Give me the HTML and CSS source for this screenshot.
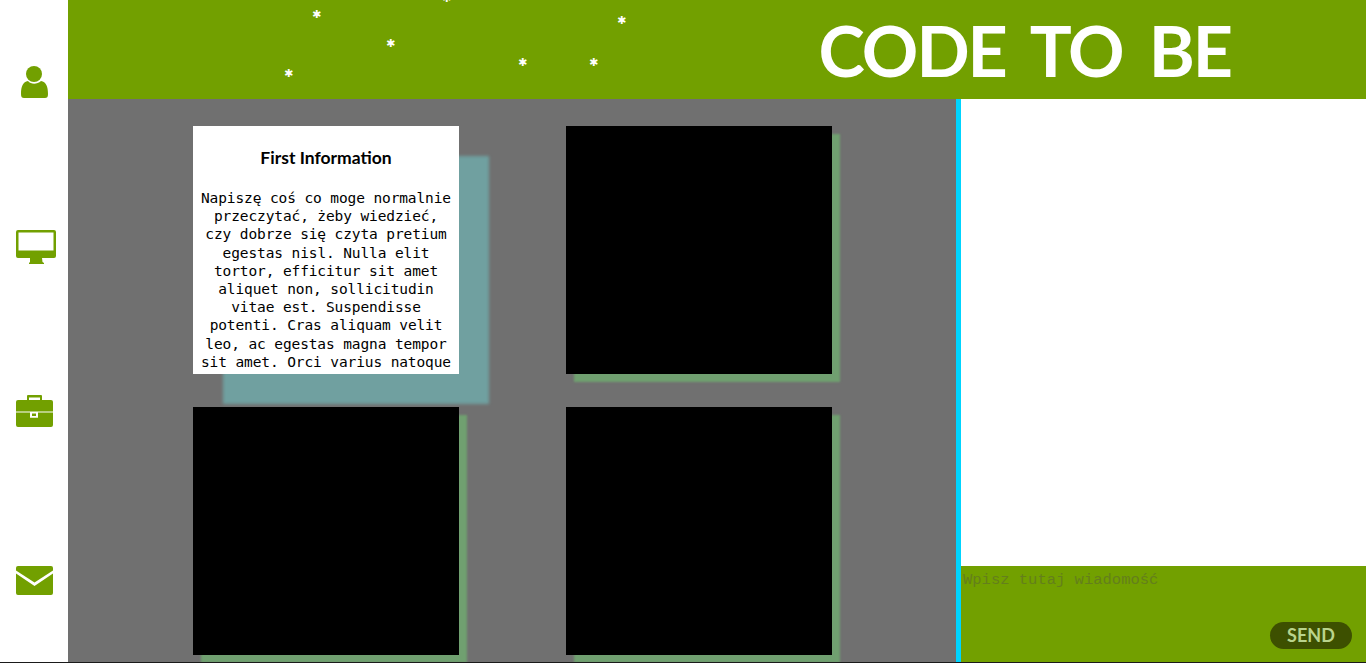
FILE: index.html
```html
<!DOCTYPE html>
<html>
	<head>
		<title>Code To Be</title>
		<meta charset="utf-8">
		<link rel="stylesheet" href="styles.css">
	</head>
	<body>
		<div id="page">
			<nav id="sidebar">
				<a href="#" class="nav_item">
					<svg class="nav_icon" viewBox="0 0 44 45">
						<circle cx="22" cy="14" r="8"/>
						<path d="M9 34 C9 26 11 22 16 21 C19 24.5 25 24.5 29 21 C34 22 36 26 36 34 C36 37 35 38 33 38 L12 38 C10 38 9 37 9 34 Z"/>
					</svg>
				</a>
				<a href="#" class="nav_item">
					<svg class="nav_icon" viewBox="0 0 44 45">
						<path fill-rule="evenodd" d="M6 5 L42 5 Q44 5 44 7 L44 31 Q44 33 42 33 L6 33 Q4 33 4 31 L4 7 Q4 5 6 5 Z M6.5 7.5 L6.5 25.5 L41.5 25.5 L41.5 7.5 Z"/>
						<path d="M18 33 L30 33 L30.5 37 L32 38 L32 39 L17 39 L17 38 L18 37 Z"/>
					</svg>
				</a>
				<a href="#" class="nav_item">
					<svg class="nav_icon" viewBox="0 0 44 45">
						<path d="M16 5 L29 5 Q30 5 30 6 L30 10 L28 10 L28 7.5 L17 7.5 L17 10 L15 10 L15 6 Q15 5 16 5 Z"/>
						<path d="M6 10 L39 10 Q41 10 41 12 L41 21.5 L4 21.5 L4 12 Q4 10 6 10 Z"/>
						<path fill-rule="evenodd" d="M4 22.5 L18 22.5 L18 27.7 L26 27.7 L26 22.5 L41 22.5 L41 35 Q41 37 39 37 L6 37 Q4 37 4 35 Z M20 23.5 L20 26 L24 26 L24 23.5 Z"/>
					</svg>
				</a>
				<a href="#" class="nav_item">
					<svg class="nav_icon" viewBox="0 0 44 45">
						<path d="M6 11 L39 11 Q41 11 41 13 L41 15.5 L22.5 27.5 L4 15.5 L4 13 Q4 11 6 11 Z"/>
						<path d="M4 18.5 L22.5 31 L41 18.5 L41 38 Q41 40 39 40 L6 40 Q4 40 4 38 Z"/>
					</svg>
				</a>
			</nav>
			<div id="content">
				<header id="top_bar">
					<span class="flake flake_1">✱</span>
					<span class="flake flake_2">✱</span>
					<span class="flake flake_3">✱</span>
					<span class="flake flake_4">✱</span>
					<span class="flake flake_5">✱</span>
					<span class="flake flake_6">✱</span>
					<span class="flake flake_7">✱</span>
					<h1 id="logo">CODE TO BE</h1>
				</header>
				<div id="columns">
					<main id="cards">
						<section class="card card_first">
							<h2 class="card_title">First Information</h2>
							<p class="card_text">Napiszę coś co moge normalnie przeczytać, żeby wiedzieć, czy dobrze się czyta pretium egestas nisl. Nulla elit tortor, efficitur sit amet aliquet non, sollicitudin vitae est. Suspendisse potenti. Cras aliquam velit leo, ac egestas magna tempor sit amet. Orci varius natoque</p>
						</section>
						<section class="card"></section>
						<section class="card"></section>
						<section class="card"></section>
					</main>
					<aside id="chat">
						<div id="chat_log"></div>
						<form id="chat_form">
							<textarea id="chat_input" placeholder="Wpisz tutaj wiadomość"></textarea>
							<button id="chat_send" type="button">SEND</button>
						</form>
					</aside>
				</div>
			</div>
		</div>
	</body>
</html>
```
FILE: styles.css
```css
html, body {
	margin: 0px;
	padding: 0px;
	width: 100%;
	height: 100%;
	overflow: hidden;
	background-color: #1a1a1a;
}

#page {
	display: flex;
	height: 662px;
	overflow: hidden;
}

#sidebar {
	display: grid;
	grid-template-rows: repeat(4, 165px);
	flex: 0 0 68px;
	background-color: #FFF;
}

.nav_item {
	display: flex;
	align-items: center;
	justify-content: center;
}

.nav_icon {
	width: 44px;
	height: 45px;
	fill: #72a000;
}

#content {
	display: flex;
	flex-direction: column;
	flex: 1;
	min-width: 0;
}

#top_bar {
	position: relative;
	display: flex;
	align-items: center;
	justify-content: flex-end;
	flex: 0 0 99px;
	padding-right: 135px;
	background-color: #72a000;
	overflow: hidden;
}

#logo {
	margin: 0px;
	color: #FFF;
	font-family: "Lato", sans-serif;
	font-size: 70px;
	font-weight: 700;
	line-height: 1;
	letter-spacing: -2px;
	word-spacing: 11px;
	white-space: nowrap;
}

.flake {
	position: absolute;
	color: #FFF;
	font-family: "DejaVu Sans", sans-serif;
	font-size: 11px;
	line-height: 12px;
}

.flake_1 { left: 244px; top: 9px; }
.flake_2 { left: 374px; top: -7px; }
.flake_3 { left: 549px; top: 15px; }
.flake_4 { left: 318px; top: 38px; }
.flake_5 { left: 216px; top: 68px; }
.flake_6 { left: 450px; top: 57px; }
.flake_7 { left: 521px; top: 57px; }

#columns {
	display: flex;
	flex: 1;
	min-height: 0;
}

#cards {
	display: grid;
	grid-template-columns: repeat(2, 266px);
	grid-template-rows: repeat(2, 248px);
	column-gap: 107px;
	row-gap: 33px;
	flex: 0 0 888px;
	box-sizing: border-box;
	padding: 27px 0px 0px 125px;
	background-color: #707070;
	overflow: hidden;
}

.card {
	background-color: #000;
	box-shadow: 8px 8px 2px #70a070;
	overflow: hidden;
}

.card_first {
	background-color: #FFF;
	box-shadow: 30px 30px 3px #70a0a0;
	box-sizing: border-box;
	padding: 0px 6px;
	text-align: center;
	color: #000;
}

.card_title {
	margin: 21px 0px 0px 0px;
	font-family: "Lato", sans-serif;
	font-size: 17.5px;
	font-weight: 700;
	line-height: 22px;
}

.card_text {
	margin: 20px 0px 0px 0px;
	font-family: "DejaVu Sans Mono", monospace;
	font-size: 14.5px;
	line-height: 18.2px;
	letter-spacing: -0.11px;
}

#chat {
	display: flex;
	flex-direction: column;
	flex: 1;
	border-left: 5px solid #00d4ff;
	background-color: #FFF;
}

#chat_log {
	flex: 1;
}

#chat_form {
	display: flex;
	flex-direction: column;
	flex: 0 0 96px;
	box-sizing: border-box;
	padding: 0px 14px 13px 0px;
	background-color: #72a000;
}

#chat_input {
	flex: 1;
	margin: 0px;
	padding: 5px 2px;
	border: none;
	outline: none;
	resize: none;
	background-color: transparent;
	font-family: "Liberation Mono", monospace;
	font-size: 15.5px;
}

#chat_input::placeholder {
	color: #647f1c;
	opacity: 1;
}

#chat_send {
	align-self: flex-end;
	width: 82px;
	height: 27px;
	padding: 0px;
	border: none;
	border-radius: 14px;
	background-color: #3d5000;
	color: #b9d48c;
	font-family: "Lato", sans-serif;
	font-size: 18px;
	font-weight: 700;
	line-height: 27px;
}
```
